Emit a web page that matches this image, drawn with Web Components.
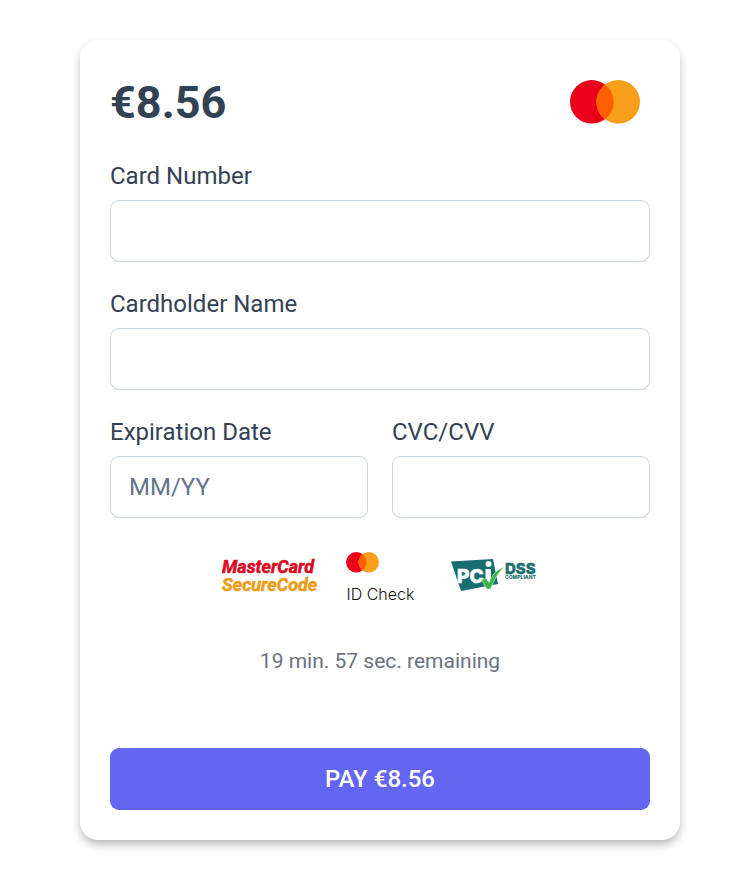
<!DOCTYPE html>
<html lang="en">
<head>
<meta charset="utf-8">
<meta name="viewport" content="width=device-width, initial-scale=1">
<title>Card payment</title>
<style>
*{box-sizing:border-box}
body{margin:0;padding:40px 53px 40px 80px;background:#fff;font-family:Roboto,"Liberation Sans",sans-serif;font-size:24px;line-height:36px;color:#334155}
</style>
</head>
<body>
<payment-card></payment-card>
<script>
class BaseElement extends HTMLElement {
  connectedCallback() {
    if (this.shadowRoot) return;
    this.attachShadow({ mode: "open" }).innerHTML = "<style>*{box-sizing:border-box}</style>" + this.render();
  }
}

customElements.define("overlap-circles", class extends BaseElement {
  render() {
    return `<style>:host{display:block}svg{display:block;width:100%;height:auto}</style>
    <svg viewBox="0 0 69 43" role="img" aria-label="Mastercard">
      <circle cx="21.5" cy="21.5" r="21.5" fill="#eb001b"/>
      <circle cx="47.5" cy="21.5" r="21.5" fill="#f79e1b"/>
      <path d="M34.5 4.4a21.5 21.5 0 0 1 0 34.2a21.5 21.5 0 0 1 0-34.2z" fill="#ff5f00"/>
    </svg>`;
  }
});

customElements.define("form-field", class extends BaseElement {
  render() {
    const a = n => this.getAttribute(n) || "";
    return `<style>
      :host{display:block;min-width:0}
      label{display:block;margin-bottom:6px}
      input{display:block;width:100%;height:62px;padding:0 18px;border:1px solid #cbd5e1;border-radius:9px;background:#fff;box-shadow:0 1px 2px rgb(0 0 0 / .05);font:inherit;color:inherit}
      input::placeholder{color:#64748b;opacity:1}
    </style>
    <label for="control">${a("label")}</label>
    <input id="control" type="text" inputmode="${a("mode") || "text"}" autocomplete="${a("autofill")}" placeholder="${a("hint")}">`;
  }
});

customElements.define("secure-code-logo", class extends BaseElement {
  render() {
    return `<style>
      :host{display:block}
      svg{display:block;width:92px;height:40px;overflow:visible}
      text{font:italic 700 18px Roboto,sans-serif;stroke-width:.5}
    </style>
    <svg viewBox="0 0 92 40" role="img" aria-label="MasterCard SecureCode">
      <text x="0" y="17" fill="#d9091f" stroke="#d9091f">MasterCard</text>
      <text x="0" y="35" fill="#ee9b13" stroke="#ee9b13">SecureCode</text>
    </svg>`;
  }
});

customElements.define("id-check-logo", class extends BaseElement {
  render() {
    return `<style>
      :host{display:grid;gap:11px;justify-items:start}
      overlap-circles{width:33px}
      span{font:300 16px/20px Inter,Lato,sans-serif;color:#111;padding-left:1px}
    </style>
    <overlap-circles></overlap-circles><span>ID Check</span>`;
  }
});

customElements.define("pci-logo", class extends BaseElement {
  render() {
    return `<style>
      :host{display:block}
      svg{display:block;width:86px;height:34px;overflow:visible}
      text{font-family:Inter,"Open Sans",sans-serif;font-weight:800}
    </style>
    <svg viewBox="0 0 86 34" role="img" aria-label="PCI DSS compliant">
      <path d="M1 2.5L43 0L48 25L11 32z" fill="#176d70"/>
      <text x="7" y="24" font-size="19" fill="#fff" stroke="#fff" stroke-width=".6">PC</text>
      <path d="M35.500 10h5.500v13h-5.500z" fill="#fff"/>
      <circle cx="38.500" cy="5" r="3" fill="#fff"/>
      <path d="M31.500 20.500l5-1 2.500 4C42 16 46 11 54 8C48 14 44 21 40.500 30h-4z" fill="#39b54a" stroke="#fff" stroke-width=".5"/>
      <text x="55" y="15" font-size="15" fill="#176d70" stroke="#176d70" stroke-width=".4">DSS</text>
      <text x="55" y="20" font-size="5" fill="#176d70">COMPLIANT</text>
    </svg>`;
  }
});

customElements.define("pay-button", class extends BaseElement {
  render() {
    return `<style>
      :host{display:block}
      button{display:block;width:100%;height:62px;padding:0;border:0;border-radius:9px;background:#6366f1;color:#fff;font:inherit;font-weight:500;cursor:pointer}
    </style><button type="submit"><slot></slot></button>`;
  }
});

customElements.define("payment-card", class extends BaseElement {
  render() {
    return `<style>
      :host{display:block;padding:30px;border-radius:18px;background:#fff;box-shadow:0 5px 10px -1px rgb(0 0 0 / .3)}
      form{display:block}
      header{display:flex;align-items:flex-start;justify-content:space-between;height:64px;padding-right:10px}
      h1{margin:6px 0 0;font-size:45px;line-height:54px;font-weight:700}
      header overlap-circles{width:70px;margin-top:10px}
      .fields{display:grid;grid-template-columns:1fr 1fr;gap:24px;margin-top:24px}
      .wide{grid-column:1/-1}
      .logos{display:flex;justify-content:center;align-items:flex-start;margin-top:34px;height:54px;padding-right:2px}
      secure-code-logo{margin:4px 32px 0 0}
      id-check-logo{margin-right:36px}
      pci-logo{margin-top:7px}
      p{margin:39px 0 0;text-align:center;font-size:21px;line-height:32px;color:#6b7280}
      pay-button{margin-top:71px}
    </style>
    <form>
      <header><h1>€8.56</h1><overlap-circles></overlap-circles></header>
      <div class="fields">
        <form-field class="wide" label="Card Number" mode="numeric" autofill="cc-number"></form-field>
        <form-field class="wide" label="Cardholder Name" autofill="cc-name"></form-field>
        <form-field label="Expiration Date" hint="MM/YY" mode="numeric" autofill="cc-exp"></form-field>
        <form-field label="CVC/CVV" mode="numeric" autofill="cc-csc"></form-field>
      </div>
      <div class="logos"><secure-code-logo></secure-code-logo><id-check-logo></id-check-logo><pci-logo></pci-logo></div>
      <p role="timer">19 min. 57 sec. remaining</p>
      <pay-button>PAY €8.56</pay-button>
    </form>`;
  }
});
</script>
</body>
</html>
